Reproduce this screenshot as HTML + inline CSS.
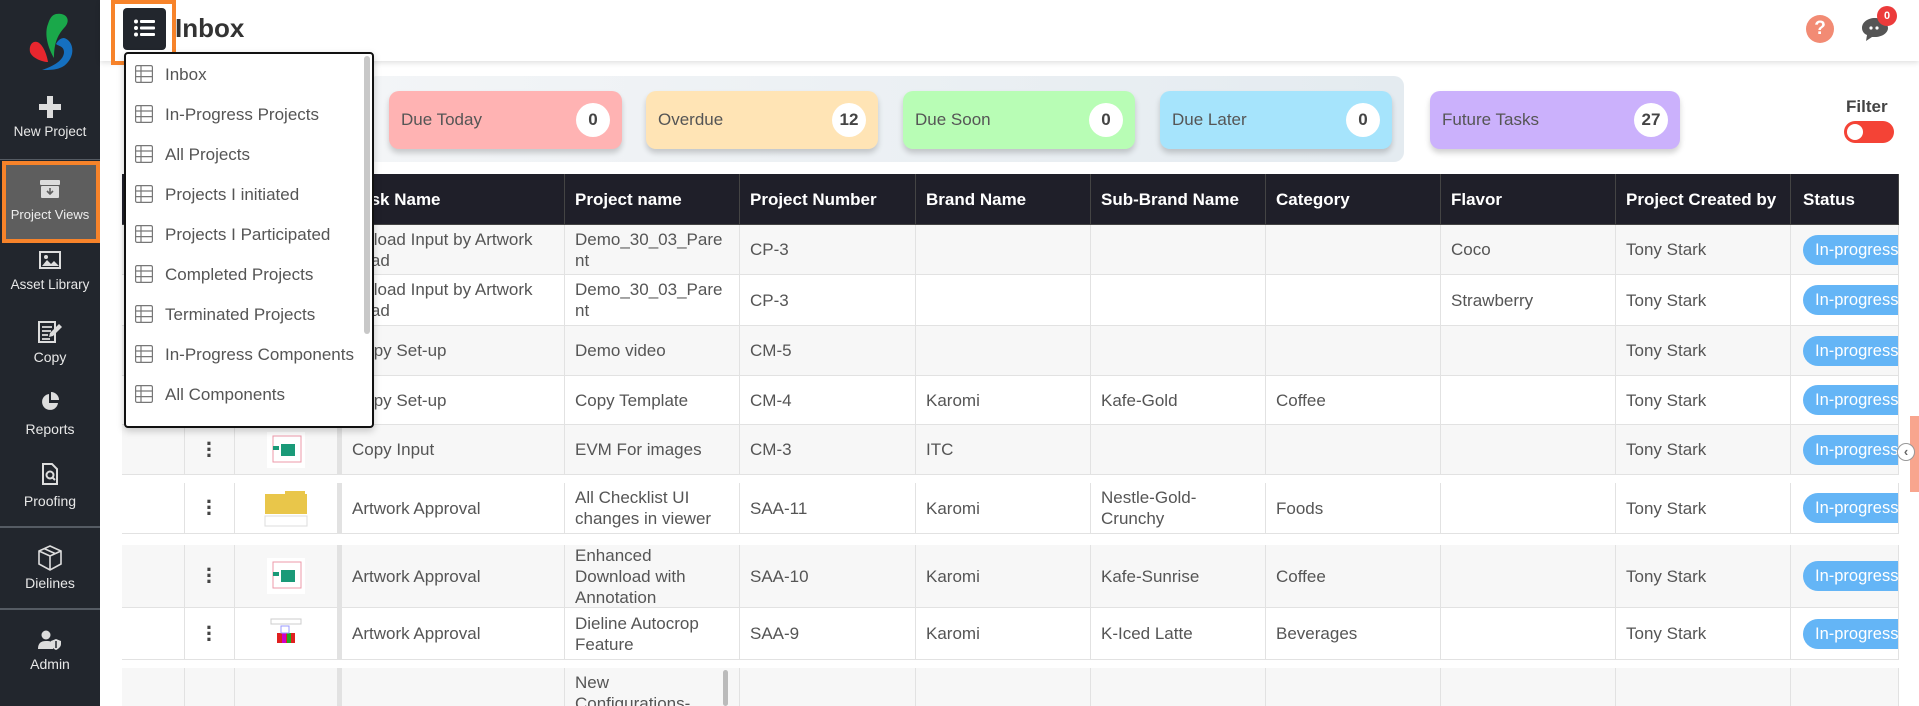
<!DOCTYPE html>
<html style="overflow:hidden;width:1919px;height:706px"><head><meta charset="utf-8"><style>
*{box-sizing:border-box;margin:0;padding:0}
body{width:1919px;height:706px;overflow:hidden;background:#fff;font-family:"Liberation Sans",Arial,sans-serif;color:#555}
#wrap{position:relative;width:1919px;height:706px;overflow:hidden}
.abs{position:absolute}
#sb{left:0;top:0;width:100px;height:706px;background:#22262d}
.si{position:absolute;left:0;width:100px;text-align:center;color:#e8e8e8;font-size:13.5px}
.sep{position:absolute;left:0;width:100px;height:2px;background:#555b63}
#hdr{left:100px;top:0;width:1819px;height:61px;background:#fff;box-shadow:0 2px 5px rgba(0,0,0,.12)}
.card{position:absolute;top:91px;height:58px;border-radius:10px;box-shadow:0 4px 6px rgba(0,0,0,.18);font-size:17px;color:#555;padding-left:12px;line-height:58px}
.cnt{position:absolute;right:12px;top:12px;width:34px;height:34px;border-radius:50%;background:#fff;text-align:center;line-height:34px;font-weight:bold;color:#444;font-size:17px}
.row{position:absolute;left:122px;width:1777px;display:flex;font-size:17px;color:#555}
.row>div{border-right:1px solid #e2e2e2;border-bottom:1px solid #e2e2e2;height:100%;display:flex;align-items:center;padding-left:10px;padding-right:14px;line-height:21px;overflow:hidden}
.hd>div{background:#1f1f29;color:#fff;font-weight:bold;border-color:#444;padding-right:0}
.g{background:#f7f7f7}
.w{background:#fff}
.c1{width:63px}.c2{width:50px;justify-content:center;padding:0!important}.c3{width:103px;justify-content:center;padding:0!important}.c4{width:227px;border-left:4px solid #e2e2e2}.c5{width:175px}.c6{width:176px}.c7,.c8,.c9,.c10,.c11{width:175px}.c12{width:108px;padding-left:12px!important;padding-right:0!important}
.dots{font-size:22px;font-weight:bold;color:#444;line-height:6px;letter-spacing:0}
.pill{background:#64b5f6;color:#fff;height:30px;line-height:30px;border-radius:15px 0 0 15px;padding-left:12px;width:100px;font-size:16.5px;white-space:nowrap}
#dd{left:124px;top:52px;width:250px;height:376px;background:#fff;border:2px solid #111;border-radius:4px;box-shadow:0 3px 8px rgba(0,0,0,.2)}
.di{position:absolute;left:9px;font-size:17px;color:#555;height:24px;line-height:24px;white-space:nowrap}
.di svg{vertical-align:middle;margin-right:12px;position:relative;top:-2px}
</style></head><body><div id="wrap">

<div id="sb" class="abs">
  <svg class="abs" style="left:28px;top:12px" width="46" height="60" viewBox="0 0 46 60">
    <path d="M28 2 C38 0 44 8 36 16 C29 24 26 32 26 46 C20 36 16 22 20 12 C22 6 24 3 28 2Z" fill="#1aa84a"/>
    <path d="M6 30 C12 28 18 38 20 50 C14 50 4 46 2 40 C1 35 3 31 6 30Z" fill="#e8262e"/>
    <path d="M36 26 C44 28 48 40 40 50 C34 58 24 58 14 58 C26 54 36 48 36 40 C36 34 30 34 28 32 C30 28 33 26 36 26Z" fill="#1570c0"/>
  </svg>
  <div class="si" style="top:96px"><svg width="22" height="22" viewBox="0 0 22 22"><path d="M8 0h6v8h8v6h-8v8H8v-8H0V8h8z" fill="#ddd"/></svg></div>
  <div class="si" style="top:124px">New Project</div>
  <div class="sep" style="top:159px;height:1px"></div>
  <div class="abs" style="left:2px;top:161px;width:98px;height:82px;border:4px solid #f7832a;background:#5e5e5e"></div>
  <div class="si" style="top:180px"><svg width="20" height="18" viewBox="0 0 20 18"><rect x="0" y="0" width="20" height="5" rx="1" fill="#ddd"/><rect x="1" y="6" width="18" height="12" rx="1" fill="#ddd"/><path d="M10 8v6M7 11l3 3 3-3" stroke="#5e5e5e" stroke-width="1.6" fill="none"/></svg></div>
  <div class="si" style="top:207px;font-size:13px;color:#eee">Project Views</div>
  <div class="si" style="top:251px"><svg width="22" height="18" viewBox="0 0 22 18"><rect x="1" y="1" width="20" height="16" fill="none" stroke="#ddd" stroke-width="2"/><path d="M3 15l5-6 4 4 3-3 5 5z" fill="#ddd"/><circle cx="7" cy="6" r="2" fill="#ddd"/></svg></div>
  <div class="si" style="top:277px">Asset Library</div>
  <div class="si" style="top:320px"><svg width="26" height="24" viewBox="0 0 26 24"><path d="M2 2h16v20H2z" fill="none" stroke="#ddd" stroke-width="2"/><path d="M5 7h10M5 11h9M5 15h6M5 19h8" stroke="#ddd" stroke-width="1.8"/><path d="M22 4l3 3-9 9-4 1 1-4z" fill="#ddd"/></svg></div>
  <div class="si" style="top:349px;font-size:14px">Copy</div>
  <div class="si" style="top:392px"><svg width="20" height="20" viewBox="0 0 20 20"><path d="M9 2a8 8 0 1 0 9 9H9z" fill="#ddd"/><path d="M11 0a8 8 0 0 1 8 8h-8z" fill="#ddd"/></svg></div>
  <div class="si" style="top:421px;font-size:14px">Reports</div>
  <div class="si" style="top:463px"><svg width="16" height="22" viewBox="0 0 16 22"><path d="M1 1h9l5 5v15H1z" fill="none" stroke="#ddd" stroke-width="2"/><circle cx="8" cy="12" r="3.5" fill="none" stroke="#ddd" stroke-width="2"/><path d="M10 14l3 3" stroke="#ddd" stroke-width="2"/></svg></div>
  <div class="si" style="top:493px;font-size:14px">Proofing</div>
  <div class="sep" style="top:526px"></div>
  <div class="si" style="top:545px"><svg width="24" height="26" viewBox="0 0 24 26"><path d="M12 1L23 6v13l-11 6L1 19V6z M1 6l11 5 11-5 M12 11v14 M6 3.5l11 5" fill="none" stroke="#ddd" stroke-width="1.6"/></svg></div>
  <div class="si" style="top:575px;font-size:14px">Dielines</div>
  <div class="sep" style="top:608px"></div>
  <div class="si" style="top:630px"><svg width="24" height="20" viewBox="0 0 24 20"><circle cx="8" cy="5" r="4.5" fill="#ddd"/><path d="M0 19c0-6 3-8 8-8s6 1 7 2v6z" fill="#ddd"/><path d="M18 9l5 2v3c0 3-3 5-5 6-2-1-5-3-5-6v-3z" fill="#ddd"/><path d="M18 11v7" stroke="#22262d" stroke-width="1.5"/></svg></div>
  <div class="si" style="top:656px;font-size:14px">Admin</div>
</div>

<div id="hdr" class="abs"></div>
<div class="abs" style="left:123px;top:8px;width:43px;height:42px;background:#22262d;border-radius:4px"></div>
<svg class="abs" style="left:134px;top:19px" width="21" height="18" viewBox="0 0 21 18"><g fill="#fff"><circle cx="2" cy="2.5" r="2"/><circle cx="2" cy="9" r="2"/><circle cx="2" cy="15.5" r="2"/><rect x="6" y="1" width="15" height="3" rx="1"/><rect x="6" y="7.5" width="15" height="3" rx="1"/><rect x="6" y="14" width="15" height="3" rx="1"/></g></svg>
<div class="abs" style="left:111px;top:0;width:65px;height:65px;border:4px solid #f7832a"></div>
<div class="abs" style="left:175px;top:13px;font-size:26px;font-weight:bold;color:#333">Inbox</div>
<div class="abs" style="left:1806px;top:15px;width:28px;height:28px;border-radius:50%;background:#f28b74;color:#fff;font-weight:bold;font-size:19px;text-align:center;line-height:28px">?</div>
<svg class="abs" style="left:1861px;top:16px" width="28" height="26" viewBox="0 0 28 26"><path d="M14 2C7 2 1 6 1 12c0 3 2 6 5 7l-1 6 6-4c1 0 2 0 3 0 7 0 13-4 13-9S21 2 14 2z" fill="#555"/><circle cx="10" cy="12" r="1.6" fill="#fff"/><circle cx="16" cy="12" r="1.6" fill="#fff"/></svg>
<div class="abs" style="left:1877px;top:6px;width:20px;height:20px;border-radius:50%;background:#ec3b3b;color:#fff;font-size:11px;font-weight:bold;text-align:center;line-height:20px">0</div>

<div class="abs" style="left:367px;top:76px;width:1037px;height:86px;border-radius:10px;background:linear-gradient(90deg,#f3f5f7,#e4ebf0)"></div>
<div class="card" style="left:389px;width:233px;background:#ffb3b3">Due Today<div class="cnt">0</div></div>
<div class="card" style="left:646px;width:232px;background:#ffe4b5">Overdue<div class="cnt">12</div></div>
<div class="card" style="left:903px;width:232px;background:#b8fdb5">Due Soon<div class="cnt">0</div></div>
<div class="card" style="left:1160px;width:232px;background:#a6e4fc">Due Later<div class="cnt">0</div></div>
<div class="card" style="left:1430px;width:250px;background:#cbb1fc">Future Tasks<div class="cnt">27</div></div>
<div class="abs" style="left:1846px;top:97px;font-size:17px;font-weight:bold;color:#444">Filter</div>
<div class="abs" style="left:1844px;top:121px;width:50px;height:22px;border-radius:11px;background:#f44336"><div style="position:absolute;left:3px;top:3px;width:16px;height:16px;border-radius:50%;background:#fff"></div></div>

<div class="row hd" style="top:174px;height:51px"><div class="c1"></div><div class="c2"></div><div class="c3"></div><div class="c4">Task Name</div><div class="c5">Project name</div><div class="c6">Project Number</div><div class="c7">Brand Name</div><div class="c8">Sub-Brand Name</div><div class="c9">Category</div><div class="c10">Flavor</div><div class="c11">Project Created by</div><div class="c12">Status</div></div>

<div class="row g" style="top:225px;height:50px"><div class="c1"></div><div class="c2"></div><div class="c3"></div><div class="c4">Upload Input by Artwork Lead</div><div class="c5">Demo_30_03_Pare nt</div><div class="c6">CP-3</div><div class="c7"></div><div class="c8"></div><div class="c9"></div><div class="c10">Coco</div><div class="c11">Tony Stark</div><div class="c12"><span class="pill">In-progress</span></div></div>
<div class="row w" style="top:275px;height:51px"><div class="c1"></div><div class="c2"></div><div class="c3"></div><div class="c4">Upload Input by Artwork Lead</div><div class="c5">Demo_30_03_Pare nt</div><div class="c6">CP-3</div><div class="c7"></div><div class="c8"></div><div class="c9"></div><div class="c10">Strawberry</div><div class="c11">Tony Stark</div><div class="c12"><span class="pill">In-progress</span></div></div>
<div class="row g" style="top:326px;height:50px"><div class="c1"></div><div class="c2"></div><div class="c3"></div><div class="c4">Copy Set-up</div><div class="c5">Demo video</div><div class="c6">CM-5</div><div class="c7"></div><div class="c8"></div><div class="c9"></div><div class="c10"></div><div class="c11">Tony Stark</div><div class="c12"><span class="pill">In-progress</span></div></div>
<div class="row w" style="top:376px;height:49px"><div class="c1"></div><div class="c2"></div><div class="c3"></div><div class="c4">Copy Set-up</div><div class="c5">Copy Template</div><div class="c6">CM-4</div><div class="c7">Karomi</div><div class="c8">Kafe-Gold</div><div class="c9">Coffee</div><div class="c10"></div><div class="c11">Tony Stark</div><div class="c12"><span class="pill">In-progress</span></div></div>
<div class="row g" style="top:425px;height:50px"><div class="c1"></div><div class="c2"><span class="dots">·<br>·<br>·</span></div><div class="c3"><svg width="38" height="36"><rect width="38" height="36" fill="#fff"/><rect x="6" y="4" width="28" height="26" fill="none" stroke="#e9a" stroke-width="1"/><rect x="14" y="12" width="14" height="12" fill="#1a9a78"/><rect x="6" y="14" width="6" height="4" fill="#1a9a78"/></svg></div><div class="c4">Copy Input</div><div class="c5">EVM For images</div><div class="c6">CM-3</div><div class="c7">ITC</div><div class="c8"></div><div class="c9"></div><div class="c10"></div><div class="c11">Tony Stark</div><div class="c12"><span class="pill">In-progress</span></div></div>
<div class="row w" style="top:483px;height:51px"><div class="c1"></div><div class="c2"><span class="dots">·<br>·<br>·</span></div><div class="c3"><svg width="46" height="40"><rect x="2" y="6" width="42" height="20" fill="#e9c64a"/><rect x="22" y="3" width="20" height="6" fill="#e9c64a"/><rect x="2" y="28" width="42" height="10" fill="none" stroke="#ddd"/></svg></div><div class="c4">Artwork Approval</div><div class="c5">All Checklist UI changes in viewer</div><div class="c6">SAA-11</div><div class="c7">Karomi</div><div class="c8">Nestle-Gold-Crunchy</div><div class="c9">Foods</div><div class="c10"></div><div class="c11">Tony Stark</div><div class="c12"><span class="pill">In-progress</span></div></div>
<div class="row g" style="top:545px;height:63px"><div class="c1"></div><div class="c2"><span class="dots">·<br>·<br>·</span></div><div class="c3"><svg width="38" height="36"><rect width="38" height="36" fill="#fff"/><rect x="6" y="4" width="28" height="26" fill="none" stroke="#e9a" stroke-width="1"/><rect x="14" y="12" width="14" height="12" fill="#1a9a78"/><rect x="6" y="14" width="6" height="4" fill="#1a9a78"/></svg></div><div class="c4">Artwork Approval</div><div class="c5">Enhanced Download with Annotation</div><div class="c6">SAA-10</div><div class="c7">Karomi</div><div class="c8">Kafe-Sunrise</div><div class="c9">Coffee</div><div class="c10"></div><div class="c11">Tony Stark</div><div class="c12"><span class="pill">In-progress</span></div></div>
<div class="row w" style="top:608px;height:52px"><div class="c1"></div><div class="c2"><span class="dots">·<br>·<br>·</span></div><div class="c3"><svg width="34" height="34"><rect x="2" y="2" width="30" height="5" fill="none" stroke="#ccc"/><rect x="8" y="16" width="18" height="10" fill="#e02020"/><rect x="13" y="16" width="4" height="10" fill="#c0c"/><rect x="18" y="16" width="4" height="10" fill="#2a2"/><rect x="12" y="9" width="8" height="7" fill="none" stroke="#99f"/></svg></div><div class="c4">Artwork Approval</div><div class="c5">Dieline Autocrop Feature</div><div class="c6">SAA-9</div><div class="c7">Karomi</div><div class="c8">K-Iced Latte</div><div class="c9">Beverages</div><div class="c10"></div><div class="c11">Tony Stark</div><div class="c12"><span class="pill">In-progress</span></div></div>
<div class="row g" style="top:668px;height:60px"><div class="c1"></div><div class="c2"></div><div class="c3"></div><div class="c4"></div><div class="c5" style="align-items:flex-start;padding-top:4px">New Configurations-</div><div class="c6"></div><div class="c7"></div><div class="c8"></div><div class="c9"></div><div class="c10"></div><div class="c11"></div><div class="c12"></div></div>
<div class="abs" style="left:723px;top:670px;width:5px;height:36px;background:#bbb;border-radius:3px"></div>

<div class="abs" style="left:1910px;top:416px;width:9px;height:76px;background:#f8a58e"></div>
<div class="abs" style="left:1897px;top:443px;width:18px;height:18px;border-radius:50%;background:#fff;border:1px solid #999;color:#666;font-size:13px;font-weight:bold;text-align:center;line-height:16px">‹</div>

<div id="dd" class="abs">
  <div class="abs" style="right:2px;top:2px;width:6px;height:278px;background:#c8c8c8;border-radius:3px"></div>
  <div class="di" style="top:9px"><svg width="18" height="18" viewBox="0 0 18 18"><g fill="none" stroke="#777" stroke-width="1.2"><rect x="0.6" y="0.6" width="16.8" height="16.8" rx="1.5"/><path d="M0.6 6h16.8M0.6 11.6h16.8M6 0.6v16.8"/></g></svg>Inbox</div>
  <div class="di" style="top:49px"><svg width="18" height="18" viewBox="0 0 18 18"><g fill="none" stroke="#777" stroke-width="1.2"><rect x="0.6" y="0.6" width="16.8" height="16.8" rx="1.5"/><path d="M0.6 6h16.8M0.6 11.6h16.8M6 0.6v16.8"/></g></svg>In-Progress Projects</div>
  <div class="di" style="top:89px"><svg width="18" height="18" viewBox="0 0 18 18"><g fill="none" stroke="#777" stroke-width="1.2"><rect x="0.6" y="0.6" width="16.8" height="16.8" rx="1.5"/><path d="M0.6 6h16.8M0.6 11.6h16.8M6 0.6v16.8"/></g></svg>All Projects</div>
  <div class="di" style="top:129px"><svg width="18" height="18" viewBox="0 0 18 18"><g fill="none" stroke="#777" stroke-width="1.2"><rect x="0.6" y="0.6" width="16.8" height="16.8" rx="1.5"/><path d="M0.6 6h16.8M0.6 11.6h16.8M6 0.6v16.8"/></g></svg>Projects I initiated</div>
  <div class="di" style="top:169px"><svg width="18" height="18" viewBox="0 0 18 18"><g fill="none" stroke="#777" stroke-width="1.2"><rect x="0.6" y="0.6" width="16.8" height="16.8" rx="1.5"/><path d="M0.6 6h16.8M0.6 11.6h16.8M6 0.6v16.8"/></g></svg>Projects I Participated</div>
  <div class="di" style="top:209px"><svg width="18" height="18" viewBox="0 0 18 18"><g fill="none" stroke="#777" stroke-width="1.2"><rect x="0.6" y="0.6" width="16.8" height="16.8" rx="1.5"/><path d="M0.6 6h16.8M0.6 11.6h16.8M6 0.6v16.8"/></g></svg>Completed Projects</div>
  <div class="di" style="top:249px"><svg width="18" height="18" viewBox="0 0 18 18"><g fill="none" stroke="#777" stroke-width="1.2"><rect x="0.6" y="0.6" width="16.8" height="16.8" rx="1.5"/><path d="M0.6 6h16.8M0.6 11.6h16.8M6 0.6v16.8"/></g></svg>Terminated Projects</div>
  <div class="di" style="top:289px"><svg width="18" height="18" viewBox="0 0 18 18"><g fill="none" stroke="#777" stroke-width="1.2"><rect x="0.6" y="0.6" width="16.8" height="16.8" rx="1.5"/><path d="M0.6 6h16.8M0.6 11.6h16.8M6 0.6v16.8"/></g></svg>In-Progress Components</div>
  <div class="di" style="top:329px"><svg width="18" height="18" viewBox="0 0 18 18"><g fill="none" stroke="#777" stroke-width="1.2"><rect x="0.6" y="0.6" width="16.8" height="16.8" rx="1.5"/><path d="M0.6 6h16.8M0.6 11.6h16.8M6 0.6v16.8"/></g></svg>All Components</div>
</div>
</div></body></html>
